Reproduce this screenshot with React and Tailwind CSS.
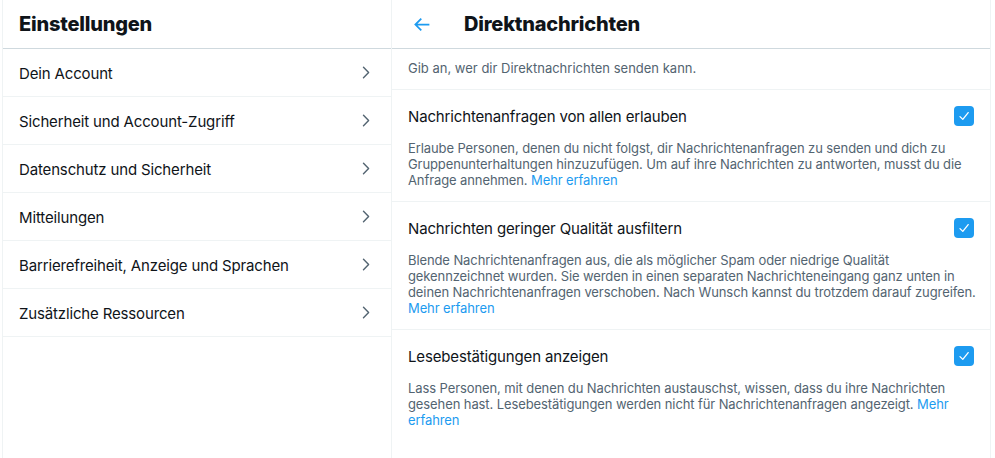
import React from "react";

const menu = [
  "Dein Account",
  "Sicherheit und Account-Zugriff",
  "Datenschutz und Sicherheit",
  "Mitteilungen",
  "Barrierefreiheit, Anzeige und Sprachen",
  "Zusätzliche Ressourcen",
];

function Chevron() {
  return (
    <svg width="8" height="13" viewBox="0 0 8 13" fill="none" className="shrink-0">
      <path d="M1.5 1.2 L6.6 6.5 L1.5 11.8" stroke="#536471" strokeWidth="1.4" strokeLinecap="round" strokeLinejoin="round" />
    </svg>
  );
}

function Check() {
  return (
    <div className="w-5 h-5 rounded-[4px] bg-[#1d9bf0] flex items-center justify-center shrink-0">
      <svg width="12" height="12" viewBox="0 0 12 12" fill="none">
        <path d="M2 6.6 L4.8 9.4 L10.2 2.6" stroke="white" strokeWidth="1.3" strokeLinecap="round" strokeLinejoin="round" />
      </svg>
    </div>
  );
}

function Link({ children }) {
  return <span className="text-[#1d9bf0]">{children}</span>;
}

const sections = [
  {
    title: "Nachrichtenanfragen von allen erlauben",
    text: "Erlaube Personen, denen du nicht folgst, dir Nachrichtenanfragen zu senden und dich zu Gruppenunterhaltungen hinzuzufügen. Um auf ihre Nachrichten zu antworten, musst du die Anfrage annehmen. ",
  },
  {
    title: "Nachrichten geringer Qualität ausfiltern",
    text: "Blende Nachrichtenanfragen aus, die als möglicher Spam oder niedrige Qualität gekennzeichnet wurden. Sie werden in einen separaten Nachrichteneingang ganz unten in deinen Nachrichtenanfragen verschoben. Nach Wunsch kannst du trotzdem darauf zugreifen. ",
  },
  {
    title: "Lesebestätigungen anzeigen",
    text: "Lass Personen, mit denen du Nachrichten austauschst, wissen, dass du ihre Nachrichten gesehen hast. Lesebestätigungen werden nicht für Nachrichtenanfragen angezeigt. ",
  },
];

export default function App() {
  return (
    <div
      className="flex h-[458px] w-[995px] bg-white text-[#0f1419] overflow-hidden pl-[2px]"
      style={{ fontFamily: "Inter, 'Noto Sans', sans-serif" }}
    >
      {/* LEFT */}
      <div className="w-[390px] shrink-0 border-l border-r border-[#eff3f4]">
        <div className="h-[49px] border-b border-[#cfd9de] flex items-center px-4">
          <h1 className="text-[20px] font-extrabold tracking-[-0.2px]">Einstellungen</h1>
        </div>
        {menu.map((m) => (
          <div key={m} className="h-12 border-b border-[#eff3f4] flex items-center justify-between pl-4 pr-[21px]">
            <span className="text-[15px] leading-5 pt-[3px] tracking-[-0.15px]">{m}</span>
            <Chevron />
          </div>
        ))}
      </div>

      {/* RIGHT */}
      <div className="w-[599px] shrink-0 border-r border-[#eff3f4]">
        <div className="h-[49px] border-b border-[#cfd9de] flex items-center px-4">
          <div className="w-14 flex items-center">
            <svg width="21" height="21" viewBox="0 0 24 24" fill="#1d9bf0" className="ml-[3px]">
              <path d="M7.414 13l5.043 5.04-1.414 1.42L3.586 12l7.457-7.46 1.414 1.42L7.414 11H21v2H7.414z" />
            </svg>
          </div>
          <h2 className="text-[20px] font-extrabold tracking-[-0.2px]">Direktnachrichten</h2>
        </div>
        <div className="h-[41px] border-b border-[#eff3f4] flex items-center px-4">
          <p className="text-[13px] text-[#536471]">Gib an, wer dir Direktnachrichten senden kann.</p>
        </div>
        {sections.map((s, i) => (
          <div key={s.title} className={"px-4 pt-3 pb-[13px] " + (i < 2 ? "border-b border-[#eff3f4]" : "")}>
            <div className="h-7 flex items-center justify-between">
              <span className="text-[15px] leading-5 pt-[2px] tracking-[-0.15px]">{s.title}</span>
              <Check />
            </div>
            <p className="mt-2.5 -mr-1 text-[13px] leading-4 text-[#536471] tracking-[-0.1px]">
              {s.text}
              <Link>Mehr erfahren</Link>
            </p>
          </div>
        ))}
      </div>
    </div>
  );
}
